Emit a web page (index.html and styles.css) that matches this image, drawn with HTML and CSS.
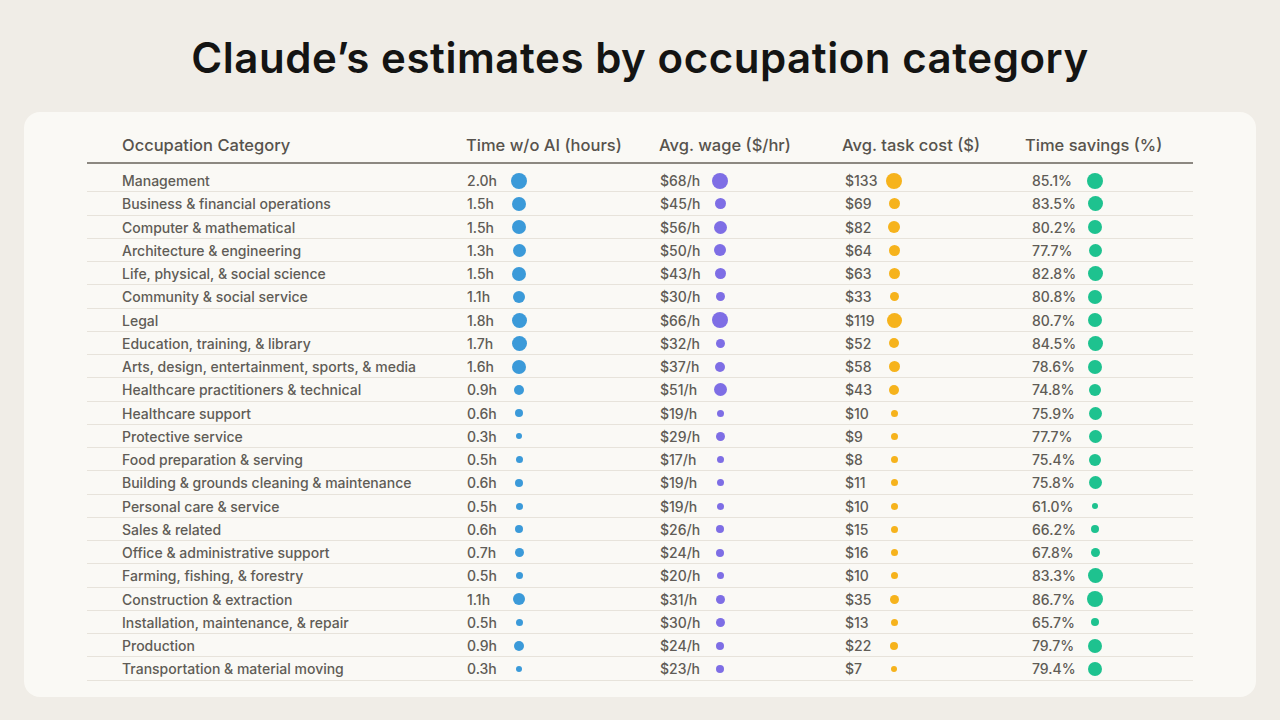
FILE: index.html
```html
<!DOCTYPE html>
<html lang="en">
<head>
<meta charset="utf-8">
<title>Claude’s estimates by occupation category</title>
<link rel="stylesheet" href="styles.css">
</head>
<body>
<div class="page">
  <h1 class="title">Claude’s estimates by occupation category</h1>
  <section class="card">
    <div class="head">
      <div class="c-name">Occupation Category</div>
      <div>Time w/o AI (hours)</div>
      <div>Avg. wage ($/hr)</div>
      <div>Avg. task cost ($)</div>
      <div>Time savings (%)</div>
    </div>
    <div class="rows">
      <div class="row"><div class="c-name">Management</div><div class="cell c-time"><span class="val">2.0h</span><span class="dotbox"><i class="dot blue" style="width:16px;height:16px"></i></span></div><div class="cell c-wage"><span class="val">$68/h</span><span class="dotbox"><i class="dot purple" style="width:16px;height:16px"></i></span></div><div class="cell c-cost"><span class="val">$133</span><span class="dotbox"><i class="dot amber" style="width:16px;height:16px"></i></span></div><div class="cell c-save"><span class="val">85.1%</span><span class="dotbox"><i class="dot green" style="width:16px;height:16px"></i></span></div></div>
      <div class="row"><div class="c-name">Business &amp; financial operations</div><div class="cell c-time"><span class="val">1.5h</span><span class="dotbox"><i class="dot blue" style="width:14px;height:14px"></i></span></div><div class="cell c-wage"><span class="val">$45/h</span><span class="dotbox"><i class="dot purple" style="width:11px;height:11px"></i></span></div><div class="cell c-cost"><span class="val">$69</span><span class="dotbox"><i class="dot amber" style="width:11px;height:11px"></i></span></div><div class="cell c-save"><span class="val">83.5%</span><span class="dotbox"><i class="dot green" style="width:15px;height:15px"></i></span></div></div>
      <div class="row"><div class="c-name">Computer &amp; mathematical</div><div class="cell c-time"><span class="val">1.5h</span><span class="dotbox"><i class="dot blue" style="width:14px;height:14px"></i></span></div><div class="cell c-wage"><span class="val">$56/h</span><span class="dotbox"><i class="dot purple" style="width:13px;height:13px"></i></span></div><div class="cell c-cost"><span class="val">$82</span><span class="dotbox"><i class="dot amber" style="width:12px;height:12px"></i></span></div><div class="cell c-save"><span class="val">80.2%</span><span class="dotbox"><i class="dot green" style="width:14px;height:14px"></i></span></div></div>
      <div class="row"><div class="c-name">Architecture &amp; engineering</div><div class="cell c-time"><span class="val">1.3h</span><span class="dotbox"><i class="dot blue" style="width:13px;height:13px"></i></span></div><div class="cell c-wage"><span class="val">$50/h</span><span class="dotbox"><i class="dot purple" style="width:12px;height:12px"></i></span></div><div class="cell c-cost"><span class="val">$64</span><span class="dotbox"><i class="dot amber" style="width:11px;height:11px"></i></span></div><div class="cell c-save"><span class="val">77.7%</span><span class="dotbox"><i class="dot green" style="width:13px;height:13px"></i></span></div></div>
      <div class="row"><div class="c-name">Life, physical, &amp; social science</div><div class="cell c-time"><span class="val">1.5h</span><span class="dotbox"><i class="dot blue" style="width:14px;height:14px"></i></span></div><div class="cell c-wage"><span class="val">$43/h</span><span class="dotbox"><i class="dot purple" style="width:11px;height:11px"></i></span></div><div class="cell c-cost"><span class="val">$63</span><span class="dotbox"><i class="dot amber" style="width:11px;height:11px"></i></span></div><div class="cell c-save"><span class="val">82.8%</span><span class="dotbox"><i class="dot green" style="width:15px;height:15px"></i></span></div></div>
      <div class="row"><div class="c-name">Community &amp; social service</div><div class="cell c-time"><span class="val">1.1h</span><span class="dotbox"><i class="dot blue" style="width:12px;height:12px"></i></span></div><div class="cell c-wage"><span class="val">$30/h</span><span class="dotbox"><i class="dot purple" style="width:9px;height:9px"></i></span></div><div class="cell c-cost"><span class="val">$33</span><span class="dotbox"><i class="dot amber" style="width:9px;height:9px"></i></span></div><div class="cell c-save"><span class="val">80.8%</span><span class="dotbox"><i class="dot green" style="width:14px;height:14px"></i></span></div></div>
      <div class="row"><div class="c-name">Legal</div><div class="cell c-time"><span class="val">1.8h</span><span class="dotbox"><i class="dot blue" style="width:15px;height:15px"></i></span></div><div class="cell c-wage"><span class="val">$66/h</span><span class="dotbox"><i class="dot purple" style="width:16px;height:16px"></i></span></div><div class="cell c-cost"><span class="val">$119</span><span class="dotbox"><i class="dot amber" style="width:15px;height:15px"></i></span></div><div class="cell c-save"><span class="val">80.7%</span><span class="dotbox"><i class="dot green" style="width:14px;height:14px"></i></span></div></div>
      <div class="row"><div class="c-name">Education, training, &amp; library</div><div class="cell c-time"><span class="val">1.7h</span><span class="dotbox"><i class="dot blue" style="width:15px;height:15px"></i></span></div><div class="cell c-wage"><span class="val">$32/h</span><span class="dotbox"><i class="dot purple" style="width:9px;height:9px"></i></span></div><div class="cell c-cost"><span class="val">$52</span><span class="dotbox"><i class="dot amber" style="width:10px;height:10px"></i></span></div><div class="cell c-save"><span class="val">84.5%</span><span class="dotbox"><i class="dot green" style="width:15px;height:15px"></i></span></div></div>
      <div class="row"><div class="c-name">Arts, design, entertainment, sports, &amp; media</div><div class="cell c-time"><span class="val">1.6h</span><span class="dotbox"><i class="dot blue" style="width:14px;height:14px"></i></span></div><div class="cell c-wage"><span class="val">$37/h</span><span class="dotbox"><i class="dot purple" style="width:10px;height:10px"></i></span></div><div class="cell c-cost"><span class="val">$58</span><span class="dotbox"><i class="dot amber" style="width:11px;height:11px"></i></span></div><div class="cell c-save"><span class="val">78.6%</span><span class="dotbox"><i class="dot green" style="width:14px;height:14px"></i></span></div></div>
      <div class="row"><div class="c-name">Healthcare practitioners &amp; technical</div><div class="cell c-time"><span class="val">0.9h</span><span class="dotbox"><i class="dot blue" style="width:10px;height:10px"></i></span></div><div class="cell c-wage"><span class="val">$51/h</span><span class="dotbox"><i class="dot purple" style="width:13px;height:13px"></i></span></div><div class="cell c-cost"><span class="val">$43</span><span class="dotbox"><i class="dot amber" style="width:10px;height:10px"></i></span></div><div class="cell c-save"><span class="val">74.8%</span><span class="dotbox"><i class="dot green" style="width:12px;height:12px"></i></span></div></div>
      <div class="row"><div class="c-name">Healthcare support</div><div class="cell c-time"><span class="val">0.6h</span><span class="dotbox"><i class="dot blue" style="width:8px;height:8px"></i></span></div><div class="cell c-wage"><span class="val">$19/h</span><span class="dotbox"><i class="dot purple" style="width:7px;height:7px"></i></span></div><div class="cell c-cost"><span class="val">$10</span><span class="dotbox"><i class="dot amber" style="width:7px;height:7px"></i></span></div><div class="cell c-save"><span class="val">75.9%</span><span class="dotbox"><i class="dot green" style="width:13px;height:13px"></i></span></div></div>
      <div class="row"><div class="c-name">Protective service</div><div class="cell c-time"><span class="val">0.3h</span><span class="dotbox"><i class="dot blue" style="width:6px;height:6px"></i></span></div><div class="cell c-wage"><span class="val">$29/h</span><span class="dotbox"><i class="dot purple" style="width:9px;height:9px"></i></span></div><div class="cell c-cost"><span class="val">$9</span><span class="dotbox"><i class="dot amber" style="width:7px;height:7px"></i></span></div><div class="cell c-save"><span class="val">77.7%</span><span class="dotbox"><i class="dot green" style="width:13px;height:13px"></i></span></div></div>
      <div class="row"><div class="c-name">Food preparation &amp; serving</div><div class="cell c-time"><span class="val">0.5h</span><span class="dotbox"><i class="dot blue" style="width:7px;height:7px"></i></span></div><div class="cell c-wage"><span class="val">$17/h</span><span class="dotbox"><i class="dot purple" style="width:7px;height:7px"></i></span></div><div class="cell c-cost"><span class="val">$8</span><span class="dotbox"><i class="dot amber" style="width:7px;height:7px"></i></span></div><div class="cell c-save"><span class="val">75.4%</span><span class="dotbox"><i class="dot green" style="width:12px;height:12px"></i></span></div></div>
      <div class="row"><div class="c-name">Building &amp; grounds cleaning &amp; maintenance</div><div class="cell c-time"><span class="val">0.6h</span><span class="dotbox"><i class="dot blue" style="width:8px;height:8px"></i></span></div><div class="cell c-wage"><span class="val">$19/h</span><span class="dotbox"><i class="dot purple" style="width:7px;height:7px"></i></span></div><div class="cell c-cost"><span class="val">$11</span><span class="dotbox"><i class="dot amber" style="width:7px;height:7px"></i></span></div><div class="cell c-save"><span class="val">75.8%</span><span class="dotbox"><i class="dot green" style="width:13px;height:13px"></i></span></div></div>
      <div class="row"><div class="c-name">Personal care &amp; service</div><div class="cell c-time"><span class="val">0.5h</span><span class="dotbox"><i class="dot blue" style="width:7px;height:7px"></i></span></div><div class="cell c-wage"><span class="val">$19/h</span><span class="dotbox"><i class="dot purple" style="width:7px;height:7px"></i></span></div><div class="cell c-cost"><span class="val">$10</span><span class="dotbox"><i class="dot amber" style="width:7px;height:7px"></i></span></div><div class="cell c-save"><span class="val">61.0%</span><span class="dotbox"><i class="dot green" style="width:6px;height:6px"></i></span></div></div>
      <div class="row"><div class="c-name">Sales &amp; related</div><div class="cell c-time"><span class="val">0.6h</span><span class="dotbox"><i class="dot blue" style="width:8px;height:8px"></i></span></div><div class="cell c-wage"><span class="val">$26/h</span><span class="dotbox"><i class="dot purple" style="width:8px;height:8px"></i></span></div><div class="cell c-cost"><span class="val">$15</span><span class="dotbox"><i class="dot amber" style="width:7px;height:7px"></i></span></div><div class="cell c-save"><span class="val">66.2%</span><span class="dotbox"><i class="dot green" style="width:8px;height:8px"></i></span></div></div>
      <div class="row"><div class="c-name">Office &amp; administrative support</div><div class="cell c-time"><span class="val">0.7h</span><span class="dotbox"><i class="dot blue" style="width:9px;height:9px"></i></span></div><div class="cell c-wage"><span class="val">$24/h</span><span class="dotbox"><i class="dot purple" style="width:8px;height:8px"></i></span></div><div class="cell c-cost"><span class="val">$16</span><span class="dotbox"><i class="dot amber" style="width:7px;height:7px"></i></span></div><div class="cell c-save"><span class="val">67.8%</span><span class="dotbox"><i class="dot green" style="width:9px;height:9px"></i></span></div></div>
      <div class="row"><div class="c-name">Farming, fishing, &amp; forestry</div><div class="cell c-time"><span class="val">0.5h</span><span class="dotbox"><i class="dot blue" style="width:7px;height:7px"></i></span></div><div class="cell c-wage"><span class="val">$20/h</span><span class="dotbox"><i class="dot purple" style="width:7px;height:7px"></i></span></div><div class="cell c-cost"><span class="val">$10</span><span class="dotbox"><i class="dot amber" style="width:7px;height:7px"></i></span></div><div class="cell c-save"><span class="val">83.3%</span><span class="dotbox"><i class="dot green" style="width:15px;height:15px"></i></span></div></div>
      <div class="row"><div class="c-name">Construction &amp; extraction</div><div class="cell c-time"><span class="val">1.1h</span><span class="dotbox"><i class="dot blue" style="width:12px;height:12px"></i></span></div><div class="cell c-wage"><span class="val">$31/h</span><span class="dotbox"><i class="dot purple" style="width:9px;height:9px"></i></span></div><div class="cell c-cost"><span class="val">$35</span><span class="dotbox"><i class="dot amber" style="width:9px;height:9px"></i></span></div><div class="cell c-save"><span class="val">86.7%</span><span class="dotbox"><i class="dot green" style="width:16px;height:16px"></i></span></div></div>
      <div class="row"><div class="c-name">Installation, maintenance, &amp; repair</div><div class="cell c-time"><span class="val">0.5h</span><span class="dotbox"><i class="dot blue" style="width:7px;height:7px"></i></span></div><div class="cell c-wage"><span class="val">$30/h</span><span class="dotbox"><i class="dot purple" style="width:9px;height:9px"></i></span></div><div class="cell c-cost"><span class="val">$13</span><span class="dotbox"><i class="dot amber" style="width:7px;height:7px"></i></span></div><div class="cell c-save"><span class="val">65.7%</span><span class="dotbox"><i class="dot green" style="width:8px;height:8px"></i></span></div></div>
      <div class="row"><div class="c-name">Production</div><div class="cell c-time"><span class="val">0.9h</span><span class="dotbox"><i class="dot blue" style="width:10px;height:10px"></i></span></div><div class="cell c-wage"><span class="val">$24/h</span><span class="dotbox"><i class="dot purple" style="width:8px;height:8px"></i></span></div><div class="cell c-cost"><span class="val">$22</span><span class="dotbox"><i class="dot amber" style="width:8px;height:8px"></i></span></div><div class="cell c-save"><span class="val">79.7%</span><span class="dotbox"><i class="dot green" style="width:14px;height:14px"></i></span></div></div>
      <div class="row"><div class="c-name">Transportation &amp; material moving</div><div class="cell c-time"><span class="val">0.3h</span><span class="dotbox"><i class="dot blue" style="width:6px;height:6px"></i></span></div><div class="cell c-wage"><span class="val">$23/h</span><span class="dotbox"><i class="dot purple" style="width:8px;height:8px"></i></span></div><div class="cell c-cost"><span class="val">$7</span><span class="dotbox"><i class="dot amber" style="width:6px;height:6px"></i></span></div><div class="cell c-save"><span class="val">79.4%</span><span class="dotbox"><i class="dot green" style="width:14px;height:14px"></i></span></div></div>
    </div>
  </section>
</div>
</body>
</html>
```
FILE: styles.css
```css
* { box-sizing: border-box; }
html, body {
  margin: 0;
  padding: 0;
  background: #f0ede7;
}
body {
  font-family: Inter, "Noto Sans", "Liberation Sans", sans-serif;
  color: #5e5a54;
}
.page {
  width: 1280px;
  height: 720px;
  display: flex;
  flex-direction: column;
}
.title {
  margin: 0;
  height: 112px;
  display: flex;
  align-items: center;
  justify-content: center;
  padding-top: 2px;
  font-size: 42px;
  font-weight: 600;
  letter-spacing: 0.55px;
  color: #141413;
}
.card {
  margin: 0 24px;
  background: #faf9f5;
  border-radius: 16px;
  padding: 0 63px 16px;
}
.head, .row {
  display: grid;
  grid-template-columns: 379px 193px 183px 183px 1fr;
  align-items: center;
}
.head {
  padding: 22px 0 6px;
  line-height: 22px;
  font-size: 16.5px;
  font-weight: 500;
  color: #57534d;
  border-bottom: 2px solid #8c8881;
}
.c-name { padding-left: 35px; white-space: nowrap; }
.rows { margin-top: 5px; }
.row {
  height: 23.25px;
  border-bottom: 1px solid #e7e3db;
  font-size: 14px;
  font-weight: 500;
  color: #605c56;
  padding-top: 1px;
}
.cell {
  display: flex;
  align-items: center;
}
.val { display: inline-block; }
.c-time .val { width: 44px; padding-left: 1px; }
.c-wage .val { width: 52px; padding-left: 1px; }
.c-cost .val { width: 43px; padding-left: 3px; }
.c-save .val { width: 61px; padding-left: 7px; }
.dotbox {
  width: 18px;
  height: 18px;
  display: flex;
  align-items: center;
  justify-content: center;
}
.dot {
  display: block;
  border-radius: 50%;
}
.blue { background: #3b9ad9; }
.purple { background: #7e6ee5; }
.amber { background: #f6b31c; }
.green { background: #1ec28f; }
```
